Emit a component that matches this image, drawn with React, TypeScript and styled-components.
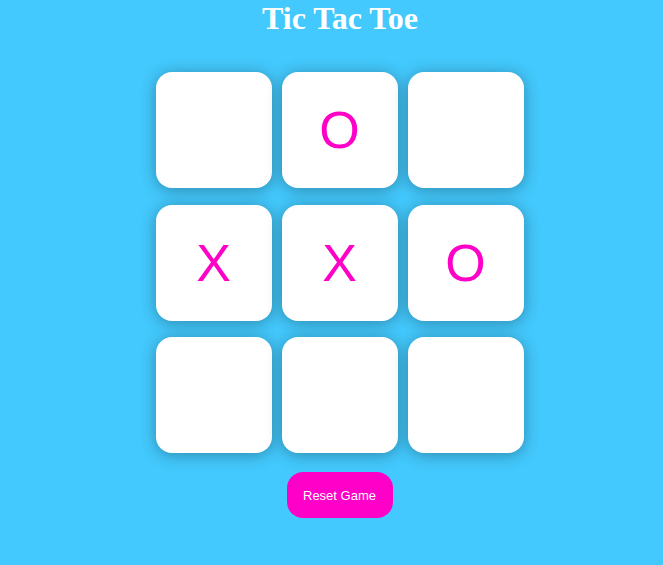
import React, { useState } from 'react'
import styled, { createGlobalStyle } from 'styled-components'

const ACCENT = '#ff00c8'
const BG = '#43c9fd'

const GlobalStyle = createGlobalStyle`
  html, body {
    margin: 0;
    background: ${BG};
    overflow: hidden;
  }
  body {
    padding-left: 8px;
  }
`

const initialBoard: Array<string> = ['', 'O', '', 'X', 'X', 'O', '', '', '']

const App = (): JSX.Element => {
  const [board, setBoard] = useState<Array<string>>(initialBoard)
  const [turn, setTurn] = useState<string>('X')

  function play (index: number) {
    if (board[index]) return
    const next = [...board]
    next[index] = turn
    setBoard(next)
    setTurn(turn === 'X' ? 'O' : 'X')
  }

  return (
    <Page>
      <GlobalStyle />
      <Title>Tic Tac Toe</Title>
      <Board>
        {board.map((mark, i) =>
          <Cell key={i} onClick={() => play(i)}>{mark}</Cell>
        )}
      </Board>
      <ResetButton onClick={() => setBoard(Array(9).fill(''))}>Reset Game</ResetButton>
    </Page>
  )
}

export default App

const Page = styled.div`
  width: 100vw;
  height: 565px;
  display: flex;
  flex-direction: column;
  align-items: center;
`

const Title = styled.h1`
  margin: 0 0 0 1px;
  font-family: "Liberation Serif", "Times New Roman", serif;
  font-size: 32px;
  font-weight: bold;
  line-height: 37px;
  color: #fff;
`

const Board = styled.div`
  margin-top: 35px;
  display: grid;
  grid-template-columns: repeat(3, 116px);
  grid-auto-rows: 116px;
  column-gap: 10px;
  row-gap: 16.5px;
`

const Cell = styled.div`
  background: #fff;
  border-radius: 16px;
  box-shadow: 0 2px 16px rgba(0, 0, 0, 0.32);
  display: flex;
  align-items: center;
  justify-content: center;
  font-family: "Liberation Sans", Arial, sans-serif;
  font-size: 52px;
  color: ${ACCENT};
  cursor: pointer;
  user-select: none;
`

const ResetButton = styled.button`
  margin-top: 19px;
  width: 106px;
  height: 46px;
  border: none;
  border-radius: 16px;
  background: ${ACCENT};
  color: #fff;
  font-family: "Liberation Sans", Arial, sans-serif;
  font-size: 13px;
  cursor: pointer;
`
